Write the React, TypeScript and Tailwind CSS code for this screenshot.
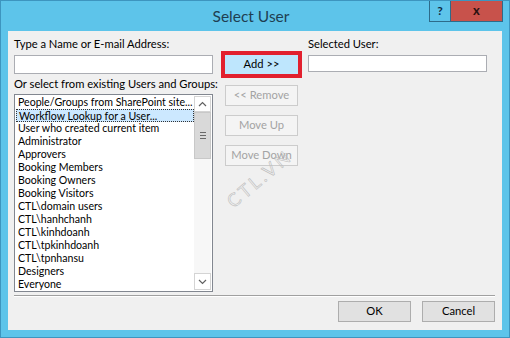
import React from 'react';

const items = [
  'People/Groups from SharePoint site...',
  'Workflow Lookup for a User...',
  'User who created current item',
  'Administrator',
  'Approvers',
  'Booking Members',
  'Booking Owners',
  'Booking Visitors',
  'CTL\\domain users',
  'CTL\\hanhchanh',
  'CTL\\kinhdoanh',
  'CTL\\tpkinhdoanh',
  'CTL\\tpnhansu',
  'Designers',
  'Everyone',
];

const font = "font-['Segoe_UI','Lato','Liberation_Sans',sans-serif]";

function DisabledButton({ label }: { label: string }) {
  return (
    <div className="w-[73px] h-[21px] border border-[#cccccc] bg-[#f4f4f4] flex items-center justify-center text-[#a3a3a3] whitespace-nowrap">
      {label}
    </div>
  );
}

export default function App() {
  return (
    <div className={`w-[510px] h-[338px] bg-[#5dc4ea] border border-[#3d95bf] flex flex-col text-[11.2px] text-black ${font}`}>
      {/* title bar */}
      <div className="h-[30px] flex items-start shrink-0">
        <div className="w-[72px]" />
        <div className="flex-1 text-center text-[15.5px] leading-[30px] text-[#1f3f52]">Select User</div>
        <div className="flex h-[21px] mr-[6px]">
          <div className="w-[21px] h-full border border-[#2d6b8a] border-t-0 border-r-0 flex items-center justify-center text-[12px] font-bold text-[#102a44]">?</div>
          <div className="w-[53px] h-full border border-[#2d6b8a] border-t-0 bg-[#c8524b] flex items-center justify-center text-[13px] font-bold text-[#2a1010]">x</div>
        </div>
      </div>

      {/* client */}
      <div className="relative flex-1 mx-[7px] mb-[7px] bg-[#f0f0f0] flex flex-col">
        <div className="flex pl-[6px] pt-[5px]">
          {/* left column */}
          <div className="w-[199px] flex flex-col">
            <div className="h-[16px] leading-[16px] whitespace-nowrap">Type a Name or E-mail Address:</div>
            <div className="mt-[3px] h-[19px] bg-white border border-[#abadb3]" />
            <div className="mt-[2px] h-[16px] leading-[16px] whitespace-nowrap">Or select from existing Users and Groups:</div>
            <div className="mt-[2px] h-[198px] bg-white border border-[#828790] flex p-[1px]">
              <div className="flex-1 min-w-0 flex flex-col text-[10.6px]">
                {items.map((it, i) => (
                  <div
                    key={it}
                    className={`h-[13px] leading-[13px] pl-[2px] whitespace-nowrap ${i === 1 ? 'bg-[#cce8ff] border border-dotted border-[#333333] pl-[1px] leading-[11px]' : ''}`}
                  >
                    {it}
                  </div>
                ))}
              </div>
              {/* scrollbar */}
              <div className="w-[17px] shrink-0 flex flex-col bg-[#f7f7f7]">
                <div className="h-[16px] border border-[#d4d4d4] bg-white flex items-center justify-center">
                  <svg width="9" height="6" viewBox="0 0 9 6"><path d="M1 5 L4.5 1.5 L8 5" fill="none" stroke="#606060" strokeWidth="1.2" /></svg>
                </div>
                <div className="h-[47px] bg-[#d9d9d9] border border-[#c8c8c8] flex flex-col items-center justify-center gap-[2px]">
                  <div className="w-[6px] h-[1px] bg-[#6a6a6a]" />
                  <div className="w-[6px] h-[1px] bg-[#6a6a6a]" />
                  <div className="w-[6px] h-[1px] bg-[#6a6a6a]" />
                </div>
                <div className="flex-1" />
                <div className="h-[17px] border border-[#d4d4d4] bg-white flex items-center justify-center">
                  <svg width="9" height="6" viewBox="0 0 9 6"><path d="M1 1 L4.5 4.5 L8 1" fill="none" stroke="#606060" strokeWidth="1.2" /></svg>
                </div>
              </div>
            </div>
          </div>

          {/* middle column */}
          <div className="ml-[8px] w-[81px] flex flex-col items-center pt-[15px]">
            <div className="border-[4px] border-[#e2202e]">
              <div className="w-[73px] h-[19px] bg-[#bee6fd] flex items-center justify-center">Add &gt;&gt;</div>
            </div>
            <div className="mt-[7px] flex flex-col gap-[9px]">
              <DisabledButton label="<< Remove" />
              <DisabledButton label="Move Up" />
              <DisabledButton label="Move Down" />
            </div>
          </div>

          {/* right column */}
          <div className="ml-[6px] w-[179px] flex flex-col">
            <div className="h-[16px] leading-[16px]">Selected User:</div>
            <div className="mt-[3px] h-[17px] bg-white border border-[#abadb3]" />
          </div>
        </div>

        {/* separator */}
        <div className="mt-[3px] ml-[6px] mr-[7px] h-[2px] border-t border-[#a0a0a0] border-b border-b-white" />

        {/* bottom buttons */}
        <div className="flex justify-end gap-[11px] mr-[7px] mt-[4px]">
          <div className="w-[73px] h-[21px] bg-[#e1e1e1] border border-[#adadad] flex items-center justify-center">OK</div>
          <div className="w-[73px] h-[21px] bg-[#e1e1e1] border border-[#adadad] flex items-center justify-center">Cancel</div>
        </div>

        {/* watermark */}
        <div className="absolute left-[212px] top-[134px] rotate-[-40deg] text-[18px] tracking-[3px] text-transparent [-webkit-text-stroke:0.6px_#bdbdbd] pointer-events-none">
          CTL.VN
        </div>
      </div>
    </div>
  );
}
